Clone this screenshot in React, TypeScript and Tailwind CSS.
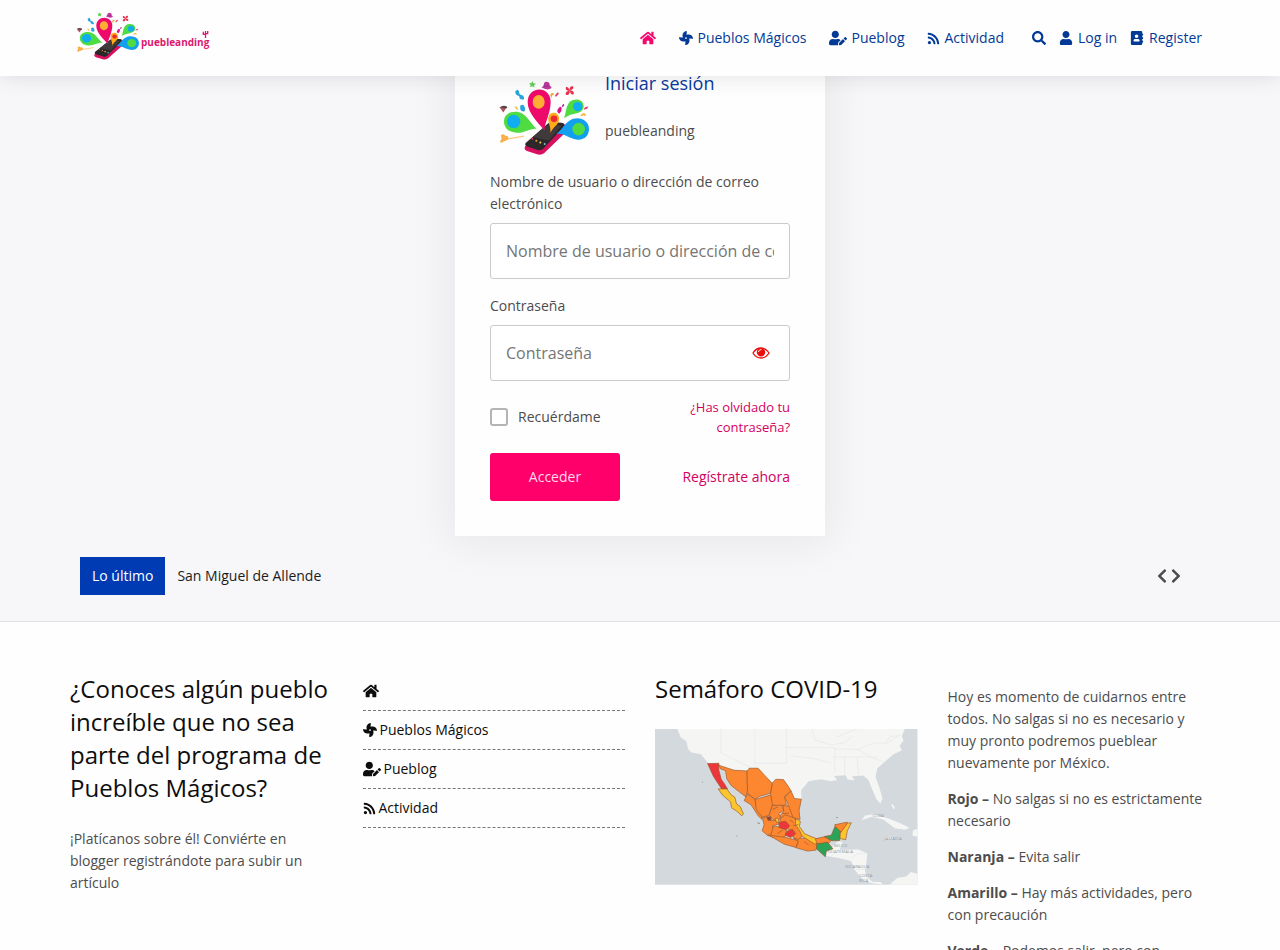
import { useState } from "react";
import type { ReactNode } from "react";
import {
  FaAddressBook,
  FaChevronLeft,
  FaChevronRight,
  FaFan,
  FaHome,
  FaRss,
  FaSearch,
  FaUser,
  FaUserEdit,
} from "react-icons/fa";

type NavItem = {
  label: string;
  icon: ReactNode;
};

const navItems: NavItem[] = [
  { label: "", icon: <FaHome className="text-base" /> },
  { label: "Pueblos Mágicos", icon: <FaFan /> },
  { label: "Pueblog", icon: <FaUserEdit className="text-lg" /> },
  { label: "Actividad", icon: <FaRss className="text-[13px]" /> },
];

const levels = [
  { name: "Rojo", text: "No salgas si no es estrictamente necesario" },
  { name: "Naranja", text: "Evita salir" },
  { name: "Amarillo", text: "Hay más actividades, pero con precaución" },
  { name: "Verde", text: "Podemos salir, pero con precaución" },
];

function PhoneLogo({ className }: { className: string }) {
  return (
    <svg
      viewBox="20 15 285 235"
      preserveAspectRatio="none"
      className={className}
      aria-hidden="true"
    >
      {/* phone */}
      <path d="M104 218 L174 150 Q180 145 190 146 L216 148 Q226 150 226 160 L224 178 L162 238 Q152 246 140 242 L110 232 Q100 227 104 218Z" fill="#d8105f" />
      <path d="M106 208 L172 150 Q178 144 190 145 L214 147 Q224 149 221 158 L160 224 Q152 232 142 229 L110 218 Q102 215 106 208Z" fill="#2c2729" />
      <path d="M128 190 L174 152 L214 155 L176 200Z" fill="#403a3c" />
      <g>
        <circle cx="126" cy="195" r="3" fill="#e8344e" />
        <circle cx="138" cy="201" r="3" fill="#e6a23a" />
        <circle cx="150" cy="206" r="3" fill="#f1dc4e" />
        <circle cx="163" cy="211" r="3" fill="#80c5de" />
      </g>
      {/* pins */}
      <path d="M162 170 C148 150 112 120 112 85 C112 62 127 47 147 47 C168 47 182 64 181 86 C180 120 164 145 162 170Z" fill="#ee0a6b" />
      <ellipse cx="145" cy="84" rx="18" ry="21" fill="#ffad35" />
      <path d="M139 165 C120 162 105 178 78 177 C56 176 41 162 41 143 C41 125 55 114 75 114 C107 114 117 146 139 165Z" fill="#4fdc43" />
      <circle cx="70" cy="143" r="20" fill="#10aef0" />
      <path d="M221 133 C228 118 226 96 239 83 C250 74 272 73 278 88 C285 104 274 116 256 119 C243 121 234 125 221 133Z" fill="#4fdc43" />
      <circle cx="262" cy="98" r="14" fill="#10aef0" />
      <path d="M198 180 C215 171 223 144 248 135 C273 128 296 142 296 165 C296 188 279 201 258 197 C235 193 221 177 198 180Z" fill="#129fee" />
      <circle cx="265" cy="166" r="19" fill="#4fdc43" />
      <path d="M180 178 C183 159 172 147 174 132 C176 121 184 116 192 117 C202 118 208 128 206 139 C204 153 186 161 180 178Z" fill="#ffac18" />
      <circle cx="191" cy="135" r="10" fill="#ee2937" />
      {/* confetti */}
      <path d="M126 21 L129 28 L137 29 L131 34 L133 41 L126 37 L119 40 L121 33 L116 27 L123 28Z" fill="#61cf55" />
      <path d="M153 40 Q161 38 161 27 Q169 19 177 27 L178 36 Q185 37 183 43 Q170 51 153 40Z" fill="#bf3a9f" />
      <path d="M160 36 Q170 40 179 33" fill="none" stroke="#7e2b8d" strokeWidth="2" />
      <path d="M75 52 q9-8 11 1 q-1 10 12 12 q8 13-2 12 q-11-2-9-11 q-13-1-12-14Z" fill="#26a4dc" />
      <path d="M90 95 q11-7 13 5 q4 10-3 13 q-13 1-10-18Z" fill="#26a4dc" />
      <path d="M204 104 q6-10 10-2 q2 9-7 18 q-11-7-3-16Z" fill="#d61586" />
      <path d="M216 93 q8-6 5 3 l-7 5Z" fill="#a92c9a" />
      <path d="M182 58 q9-3 9 3 q-10 4-5 13 q-9-7-4-16Z" fill="#f5aa29" />
      <path d="M202 55 l4 4 -9 10 -3-5Z" fill="#e54175" />
      <path d="M238 50 q-15 1-11-11 q8-2 11 11 q-1-15 10-13 q5 9-10 13 q15-1 12 11 q-9 4-12-11 q1 16-11 13 q-5-9 11-13Z" fill="#e8334f" />
      <path d="M27 99 L50 98 L39 116Z" fill="#a9575b" />
      <path d="M29 100 Q38 91 51 99 L48 104Z" fill="#554248" />
      <path d="M72 98 l6 0 6 9 -4 1Z" fill="#f1b72d" />
      <path d="M280 107 q3-9 14-9 q-3 10-14 9Z" fill="#ec3470" />
      <path d="M270 128 q4-12 15-9 l1 8 -7-3Z" fill="#f6b132" />
      <path d="M50 196 L101 187" stroke="#ffc87a" strokeWidth="4" />
      <path d="M31 185 q10-7 13 1 q12-1 10 10 q-6 6-14 7 q-9 8-11-1 q8-7 2-17Z" fill="#f7ae4b" />
    </svg>
  );
}

function EyeIcon() {
  return (
    <svg viewBox="0 0 18 12" className="h-3 w-[18px]" aria-hidden="true">
      <path d="M1 6 Q4 1 9 1 T17 6 Q14 11 9 11 T1 6Z" fill="none" stroke="currentColor" strokeWidth="1.3" />
      <circle cx="9" cy="5.300" r="4.200" fill="currentColor" />
      <path d="M9 2.500 q-2 0-2.500 2.200" fill="none" stroke="#ffffff" strokeWidth="1" strokeLinecap="round" />
    </svg>
  );
}

function CovidMap() {
  return (
    <svg
      viewBox="30 27 789 468"
      className="block w-full"
      role="img"
      aria-label="Semáforo COVID-19"
    >
      <path d="M30 27H819V495H30Z" fill="#d4d9de" />
      <g fill="#f5f5f4">
        <path d="M97 27 L107 52 L124 64 L130 88 L140 98 L168 103 L190 130 L240 150 L390 190 L440 240 L470 238 L469 211 L492 184 L529 178 L559 184 L578 180 L568 168 L603 166 L609 179 L630 181 L622 169 L656 167 L672 181 L680 202 L696 238 L707 251 L714 237 L704 202 L693 171 L698 146 L718 128 L746 104 L772 91 L765 77 L777 62 L772 48 L781 27Z" />
        <path d="M545 398 L568 375 L581 365 L594 367 L585 390 L642 389 L668 401 L664 446 L645 456 L631 448 L619 424 L590 416 L544 409Z" />
        <path d="M626 445 L645 454 L660 446 L666 470 L683 486 L708 487 L715 495 L681 491 L657 481 L639 461Z" />
        <path d="M735 495 L758 475 L785 470 L799 457 L819 462 V495Z" />
        <path d="M651 301 L661 287 L687 283 L721 292 L764 309 L795 324 L783 330 L751 325 L717 300 L682 291Z" />
        <path d="M721 352 L737 351 L749 358 L729 360Z M805 332 L819 327 V350 L804 348Z" />
      </g>
      {/* borders and rivers of the base map */}
      <g fill="none" stroke="#e5e7e8" strokeWidth="2">
        <path d="M228 27 V98 L318 144 M330 27 V145 M425 27 V130 H330 M422 83 H570 V160 M502 27 L510 60 L561 75 L600 68 L624 49 M600 111 V165 M637 111 L642 165 M562 111 H700 M570 87 L640 88 L690 69 L728 70 L760 48" />
        <path d="M438 107 L509 116 L559 130 M637 87 L678 111 L716 126 M576 51 L637 27 M722 70 L738 49 L770 47" />
        <path d="M582 391 L559 410 M618 418 L638 402 L663 402 M635 449 L662 449" />
      </g>
      <g stroke="#98572b" strokeWidth="2" strokeLinejoin="round">
        <path d="M188 131 L222 130 L222 151 L229 178 L239 192 L248 207 L231 208 L213 181 L205 168Z" fill="#ed363c" />
        <path d="M220 207 L246 207 L259 225 L270 232 L275 252 L286 260 L296 282 L291 288 L276 274 L260 264 L257 246 L233 226Z" fill="#fbc52e" />
        <path d="M222 136 L268 151 L307 153 L308 209 L303 231 L286 218 L259 197 L246 177 L242 152 L227 147Z" fill="#fd8731" />
        <path d="M307 153 L313 145 L340 145 L365 172 L383 191 L377 220 L345 229 L331 238 L309 222 L307 184Z" fill="#fd8731" />
        <path d="M383 189 L393 178 L416 179 L431 200 L439 213 L419 230 L425 255 L403 258 L381 255 L377 225Z" fill="#fd8731" />
        <path d="M439 213 L449 236 L470 238 L463 272 L466 299 L444 293 L423 282 L430 253 L420 232Z" fill="#fd8731" />
        <path d="M308 222 L330 238 L336 267 L349 278 L352 299 L340 288 L319 255 L298 242Z" fill="#fd8731" />
        <path d="M331 239 L378 225 L383 256 L372 287 L352 292 L334 268Z" fill="#fd8731" />
        <path d="M383 257 L412 256 L417 272 L402 281 L408 297 L389 302 L373 287Z" fill="#fd8731" />
        <path d="M415 257 L432 259 L445 293 L463 304 L449 322 L414 301 L406 288 L417 274Z" fill="#fd8731" />
        <path d="M353 294 L369 290 L377 302 L398 301 L403 313 L383 318 L386 334 L371 349 L352 333 L358 315Z" fill="#fd8731" />
        <path d="M386 319 L408 322 L426 332 L421 350 L402 357 L377 350Z" fill="#fd8731" />
        <path d="M371 346 L423 353 L446 359 L462 362 L453 383 L418 373 L389 356Z" fill="#fd8731" />
        <path d="M447 356 L484 355 L519 372 L514 391 L489 394 L454 384 L461 364Z" fill="#fd8731" />
        <path d="M408 295 L421 285 L446 293 L460 307 L452 315 L463 326 L474 347 L461 359 L445 354 L450 336 L432 329 L403 313Z" fill="#fd8731" />
        <path d="M453 296 L467 305 L464 320 L480 342 L516 357 L523 370 L510 373 L472 349 L464 331 L452 314Z" fill="#fbc52e" />
        <path d="M405 307 L423 304 L435 318 L424 330 L402 323Z" fill="#ed363c" />
        <path d="M427 334 L443 328 L453 342 L438 353 L421 346Z" fill="#ed363c" />
        <path d="M512 357 L539 351 L559 362 L551 372 L516 371Z" fill="#fd8731" />
        <path d="M516 373 L548 367 L565 387 L545 394 L542 411 L515 387Z" fill="#2ba457" />
        <path d="M539 350 L560 346 L571 319 L588 334 L585 362 L562 363Z" fill="#2ba457" />
        <path d="M570 315 L608 307 L607 327 L591 338 L574 322Z" fill="#fd8731" />
        <path d="M609 310 L620 309 L608 333 L603 360 L586 356 L587 340Z" fill="#fbc52e" />
        <path d="M391 297 L399 294 L403 304 L396 309Z" fill="#fbc52e" />
        <path d="M366 292 L377 290 L380 300 L370 302Z" fill="#9a4030" />
        <path d="M383 269 L399 261 M412 281 L433 280 M444 318 L461 314 M398 342 L414 330 M478 365 L492 376 M435 300 L447 309" fill="none" />
      </g>
      <g fill="#92a0aa" fontFamily="Open Sans, sans-serif" fontSize="13">
        <text x="684" y="291">CUBA</text>
        <text x="720" y="361">JAMAICA</text>
        <text x="567" y="382">BELICE</text>
        <text x="549" y="401">GUATEMALA</text>
        <text x="602" y="445">NICARAGUA</text>
        <text x="643" y="472">COSTA</text>
        <text x="643" y="486">RICA</text>
      </g>
      <path d="M742 254 l7 12" stroke="#f5f5f4" strokeWidth="5" />
      <path d="M172 187 h2 M275 349 h3 M338 309 l7 2 M575 293 h4" fill="none" stroke="#7d8990" strokeWidth="3" />
    </svg>
  );
}

function Header() {
  return (
    <header className="sticky top-0 z-10 bg-[#fefefe] shadow-[0_2px_20px_rgba(0,0,0,0.1)]">
      <div className="mx-auto flex h-19 max-w-[1130px] items-center justify-between">
        <a href="#" className="flex items-center pb-1">
          <PhoneLogo className="h-[50px] w-[66px]" />
          <span className="relative pt-3 text-[10px] leading-4 font-bold text-[#dc1872]">
            puebleanding
            <svg viewBox="0 0 8 9" className="absolute top-2 right-0 h-2 w-[7px]" aria-hidden="true">
              <path d="M4 9V1M1.500 2v3H4M6.500 1v3H4" fill="none" stroke="#dc1872" strokeWidth="1.500" />
            </svg>
          </span>
        </a>

        <div className="flex items-center gap-7 pr-[3px] text-sm text-[#033a96]">
          <nav className="flex items-center gap-[23px]">
            {navItems.map((item, index) => (
              <a
                key={index}
                href="#"
                aria-label={item.label || "Inicio"}
                className={`flex items-center gap-1 ${index === 0 ? "text-[#f4086c]" : ""}`}
              >
                {item.icon}
                {item.label}
              </a>
            ))}
          </nav>
          <div className="flex items-center gap-[13px]">
            <button type="button" aria-label="Buscar">
              <FaSearch />
            </button>
            <a href="#" className="flex items-center gap-[5px]">
              <FaUser />
              Log in
            </a>
            <a href="#" className="flex items-center gap-[5px]">
              <FaAddressBook />
              Register
            </a>
          </div>
        </div>
      </div>
    </header>
  );
}

function LoginForm() {
  const [showPassword, setShowPassword] = useState(false);

  const inputClass =
    "block h-14 w-full rounded-[3px] border border-[#cacacd] bg-white px-[15px] text-base text-[#4d4c4c] placeholder:text-[#757575] focus:outline-none";

  return (
    <form
      onSubmit={(e) => e.preventDefault()}
      className="mx-auto -mt-10 w-full max-w-[370px] bg-[#fefefe] px-[35px] pt-9 pb-[35px] text-sm leading-[22px] shadow-[0_2px_40px_8px_rgba(0,0,0,0.06)]"
    >
      <div className="flex">
        <PhoneLogo className="mt-[7px] ml-[7px] h-[78px] w-[95px]" />
        <div className="ml-[13px]">
          <h1 className="text-lg leading-[22px] text-[#0839a0]">Iniciar sesión</h1>
          <p className="mt-[26px]">puebleanding</p>
        </div>
      </div>

      <label htmlFor="user" className="mt-[14px] mb-2 block">
        Nombre de usuario o dirección de correo electrónico
      </label>
      <input
        id="user"
        type="text"
        placeholder="Nombre de usuario o dirección de correo electrónico"
        className={inputClass}
      />

      <label htmlFor="password" className="mt-4 mb-2 block">
        Contraseña
      </label>
      <div className="relative">
        <input
          id="password"
          type={showPassword ? "text" : "password"}
          placeholder="Contraseña"
          className={inputClass}
        />
        <button
          type="button"
          aria-label="Mostrar contraseña"
          onClick={() => setShowPassword(!showPassword)}
          className="absolute inset-y-0 right-5 text-[#ed0c0c]"
        >
          <EyeIcon />
        </button>
      </div>

      <div className="mt-4 flex justify-between">
        <label className="flex items-center gap-[10px] self-center">
          <input
            type="checkbox"
            className="h-[18px] w-[18px] appearance-none rounded-[3px] border-2 border-[#b4b4b4] bg-white checked:bg-[#ff006a]"
          />
          Recuérdame
        </label>
        <a href="#" className="w-[110px] text-right text-[13px] leading-5 text-[#d30061]">
          ¿Has olvidado tu contraseña?
        </a>
      </div>

      <div className="mt-4 flex items-center justify-between">
        <button type="submit" className="h-12 w-[130px] rounded-[3px] bg-[#ff006a] text-[#ffd9ea]">
          Acceder
        </button>
        <a href="#" className="text-[#d30061]">
          Regístrate ahora
        </a>
      </div>
    </form>
  );
}

export default function App() {
  return (
    <div className="bg-[#f7f6f9] font-['Open_Sans',sans-serif] text-[#4d4c4c]">
      <Header />

      <main className="border-b border-[#e1e1e4] pb-[26px]">
        <LoginForm />
        <div className="mx-auto mt-[21px] flex max-w-[1120px] items-center justify-between text-sm">
          <div className="flex items-center gap-3">
            <span className="bg-[#003bb3] px-3 py-[9px] font-medium text-white">Lo último</span>
            <a href="#" className="text-[#1c1c1c]">
              San Miguel de Allende
            </a>
          </div>
          <div className="flex gap-1 pr-[19px]">
            <button type="button" aria-label="Anterior">
              <FaChevronLeft className="h-4 w-[10px]" />
            </button>
            <button type="button" aria-label="Siguiente">
              <FaChevronRight className="h-4 w-[10px]" />
            </button>
          </div>
        </div>
      </main>

      <footer className="bg-[#fefefe] pt-[50px] pb-12">
        <div className="mx-auto grid max-w-[1140px] grid-cols-4 gap-[30px] text-sm leading-[22px]">
          <section>
            <h2 className="mb-6 text-2xl leading-[33px] text-[#0d0d0d]">
              ¿Conoces algún pueblo increíble que no sea parte del programa de Pueblos Mágicos?
            </h2>
            <p>¡Platícanos sobre él! Conviérte en blogger registrándote para subir un artículo</p>
          </section>

          <ul className="text-[#0d0d0d]">
            {navItems.map((item, index) => (
              <li key={index} className="border-b border-dashed border-[#777777]">
                <a
                  href="#"
                  aria-label={item.label || "Inicio"}
                  className="flex h-[38px] items-center gap-[3px]"
                >
                  {item.icon}
                  {item.label}
                </a>
              </li>
            ))}
          </ul>

          <section>
            <h2 className="mb-6 text-2xl leading-[33px] text-[#0d0d0d]">Semáforo COVID-19</h2>
            <CovidMap />
          </section>

          <section className="flex flex-col gap-[14px] pt-[14px]">
            <p>
              Hoy es momento de cuidarnos entre todos. No salgas si no es necesario y muy pronto
              podremos pueblear nuevamente por México.
            </p>
            {levels.map((level) => (
              <p key={level.name}>
                <strong>{level.name} –</strong> {level.text}
              </p>
            ))}
          </section>
        </div>
      </footer>
    </div>
  );
}
